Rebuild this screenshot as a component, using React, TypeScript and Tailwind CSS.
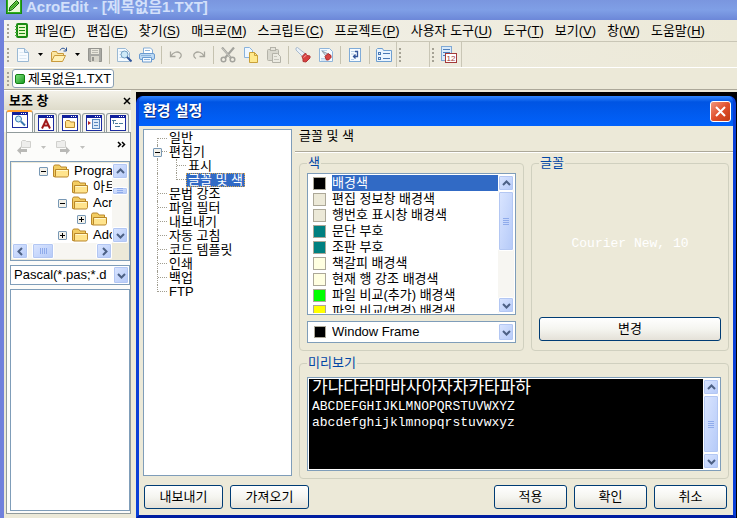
import { useState } from "react";
import type { ReactNode } from "react";
import clsx from "clsx";

const menus = [
  { label: "파일", hotkey: "F" },
  { label: "편집", hotkey: "E" },
  { label: "찾기", hotkey: "S" },
  { label: "매크로", hotkey: "M" },
  { label: "스크립트", hotkey: "C" },
  { label: "프로젝트", hotkey: "P" },
  { label: "사용자 도구", hotkey: "U" },
  { label: "도구", hotkey: "T" },
  { label: "보기", hotkey: "V" },
  { label: "창", hotkey: "W" },
  { label: "도움말", hotkey: "H" },
];

const pages = [
  { label: "일반", child: false },
  { label: "편집기", child: false, expander: true },
  { label: "표시", child: true },
  { label: "글꼴 및 색", child: true },
  { label: "문법 강조", child: false },
  { label: "파일 필터", child: false },
  { label: "내보내기", child: false },
  { label: "자동 고침", child: false },
  { label: "코드 템플릿", child: false },
  { label: "인쇄", child: false },
  { label: "백업", child: false },
  { label: "FTP", child: false },
];

const colorItems = [
  { label: "배경색", swatch: "bg-black" },
  { label: "편집 정보창 배경색", swatch: "bg-[#ece9d8]" },
  { label: "행번호 표시창 배경색", swatch: "bg-[#ece9d8]" },
  { label: "문단 부호", swatch: "bg-[#008080]" },
  { label: "조판 부호", swatch: "bg-[#008080]" },
  { label: "책갈피 배경색", swatch: "bg-[#ffffe1]" },
  { label: "현재 행 강조 배경색", swatch: "bg-[#ffffe1]" },
  { label: "파일 비교(추가) 배경색", swatch: "bg-[#00ff00]" },
  { label: "파일 비교(변경) 배경색", swatch: "bg-[#ffff00]" },
];

const folders = [
  { name: "Progra", indent: "pl-[27px]", sign: "-" },
  { name: "아트", indent: "pl-[46px]", sign: "" },
  { name: "Acr", indent: "pl-[46px]", sign: "-" },
  { name: "", indent: "pl-[65px]", sign: "+" },
  { name: "Ado", indent: "pl-[46px]", sign: "+" },
];

/* ---------- icons ---------- */

function Svg({ w = 16, h = 16, children }: { w?: number; h?: number; children: ReactNode }) {
  return (
    <svg width={w} height={h} viewBox={`0 0 ${w} ${h}`} fill="none" className="block shrink-0" aria-hidden="true">
      {children}
    </svg>
  );
}

function AppIcon() {
  return (
    <Svg>
      <rect x="0.5" y="0.5" width="15" height="15" fill="#e9fbd8" stroke="#168a10" />
      <rect x="1.5" y="1.5" width="13" height="13" stroke="#2fae1e" />
      <path d="M3 13l1-4 6.500-6.500 2.500 2.500-6.500 6.500z" fill="#6fd046" stroke="#0b5a0b" />
      <path d="M5 10.500l6-6" stroke="#0b7a0b" />
    </Svg>
  );
}

function DocIcon() {
  return (
    <Svg w={14} h={15}>
      <rect x="2" y="1" width="10" height="13" rx="1" fill="#e4f8c4" stroke="#198a12" strokeWidth="2" />
      <path d="M4 4.500h6M4 7.500h6M4 10.500h6" stroke="#198a12" />
      <path d="M0 3.500h2M0 6.500h2M0 9.500h2M0 12.500h2" stroke="#48b13a" />
    </Svg>
  );
}

function NewIcon() {
  return (
    <Svg>
      <path d="M2.500 1.500h7l4 4v9h-11z" fill="#f7fbff" stroke="#9bb9d4" />
      <path d="M9.500 1.500v4h4" fill="#d4e6f7" stroke="#9bb9d4" />
      <path d="M4.500 5.500h4M4.500 8.500h7M4.500 11.500h7" stroke="#dbe8f3" />
    </Svg>
  );
}

function OpenIcon() {
  return (
    <Svg w={18}>
      <path d="M1.500 14.500v-9l1-1h4l1 2h6v3" fill="#fbe6a0" stroke="#c99a3c" />
      <path d="M1.500 14.500l3-6h11l-3 6z" fill="#fff1b8" stroke="#c99a3c" />
      <path d="M10 3.500c1-3 5-3 6 0M16.500 0.500v3.500h-3" stroke="#2d5596" />
    </Svg>
  );
}

function SaveIcon() {
  return (
    <Svg>
      <path d="M1.500 1.500h13v13h-12l-1-1z" fill="#a9a9a4" stroke="#94948f" />
      <rect x="4" y="2" width="8" height="5" fill="#e8e6dc" />
      <rect x="4" y="9" width="8" height="6" fill="#d8d6cc" />
      <rect x="5" y="10" width="2" height="4" fill="#94948f" />
      <path d="M5 3.500h6M5 5.500h6" stroke="#b9b8b0" />
    </Svg>
  );
}

function PreviewIcon() {
  return (
    <Svg>
      <path d="M1.500 1.500h8l4 4v9h-12z" fill="#f4faff" stroke="#9bb9d4" />
      <path d="M3.500 4.500h4M3.500 7.500h2M3.500 10.500h3" stroke="#c5d9ec" />
      <circle cx="8.500" cy="7.500" r="3.500" fill="#cfeaf8" stroke="#6f9cc0" />
      <path d="M11 10l4.500 4.500" stroke="#33589c" strokeWidth="2" />
    </Svg>
  );
}

function PrintIcon() {
  return (
    <Svg>
      <path d="M4.500 6.500v-5.500h7l2 2v3.500" fill="#fff" stroke="#86aed6" />
      <rect x="0.500" y="6.500" width="15" height="6" rx="1.500" fill="#bcd9f4" stroke="#6b9bd0" />
      <path d="M3.500 10.500h9v4.500h-9z" fill="#f5faff" stroke="#6b9bd0" />
      <path d="M6 3.500h5M2 8.500h10M5 12.500h6" stroke="#8db4dc" />
    </Svg>
  );
}

function UndoIcon({ flip = false }: { flip?: boolean }) {
  return (
    <Svg>
      <g transform={flip ? "matrix(-1 0 0 1 16 0)" : undefined}>
        <path d="M2.500 4.500v5h5M3 9c2-4 6.500-5 9-3 2 1.500 1.500 4.500-1 5.500" stroke="#a7a69d" strokeWidth="1.300" />
      </g>
    </Svg>
  );
}

function CutIcon() {
  return (
    <Svg>
      <path d="M2 0.500l9 10.500M14 0.500L5 11" stroke="#a3a39d" strokeWidth="2.200" />
      <path d="M2.500 1.500l8 9" stroke="#e2e1da" strokeWidth="0.700" />
      <circle cx="3.500" cy="12.500" r="2.300" stroke="#a3a39d" strokeWidth="1.500" />
      <circle cx="12.500" cy="12.500" r="2.300" stroke="#a3a39d" strokeWidth="1.500" />
    </Svg>
  );
}

function CopyIcon() {
  return (
    <Svg>
      <path d="M1.500 0.500h5l3 3v7h-8z" fill="#eff7ff" stroke="#88b2dc" />
      <path d="M6.500 5.500h5l3 3v7h-8z" fill="#ffe98c" stroke="#c9a13a" />
      <path d="M11.500 5.500v3h3" stroke="#c9a13a" />
    </Svg>
  );
}

function PasteIcon() {
  return (
    <Svg>
      <rect x="1.500" y="2.500" width="11" height="11" rx="1" fill="#d9d8ce" stroke="#b4b3a9" />
      <rect x="4.500" y="0.500" width="5" height="3" fill="#e6e4da" stroke="#b4b3a9" />
      <path d="M6.500 6.500h5l3 3v6h-8z" fill="#ecebe2" stroke="#b4b3a9" />
      <path d="M8 9.500h3M8 12.500h5" stroke="#c7c6bd" />
    </Svg>
  );
}

function TorchIcon() {
  return (
    <Svg>
      <path d="M1 1l1.500-.5L10 6.500 7.500 9.500 1 3z" fill="#eaf1f8" stroke="#a9bbce" />
      <path d="M7 9.500L10.500 6l1.500 2.500 3 .5v2l-4 4-3-.5v-2.500z" fill="#d84040" stroke="#b03434" />
      <path d="M8.500 10.500l3-2.500" stroke="#f3a0a0" />
    </Svg>
  );
}

function TorchPageIcon() {
  return (
    <Svg>
      <path d="M1.500 1.500h10l3 3v10h-13z" fill="#f4faff" stroke="#8fb5da" />
      <path d="M3 3.500h6M3 11.500h5M3 13h6" stroke="#b9d2ea" />
      <path d="M4 4l4 5 2-2z" fill="#dfe7f0" stroke="#8d9aaa" />
      <path d="M7 9.500l3-3 3 2v2l-2.500 2.500h-2z" fill="#d94545" stroke="#a82c2c" />
    </Svg>
  );
}

function WrapIcon() {
  return (
    <Svg>
      <rect x="2.500" y="1.500" width="11" height="13" fill="#f6fbff" stroke="#7fabd8" />
      <path d="M4 4.500h4M4 7h3M4 12.500h3" stroke="#b5cde6" />
      <path d="M8 4.500h2.500v5h-4M8.500 7.500l-2 2 2 2" stroke="#33559a" strokeWidth="1.300" />
    </Svg>
  );
}

function ListIcon() {
  return (
    <Svg>
      <path d="M0.500 14.500v-12l1-1h5l1 2h8v11z" fill="#e9f4ff" stroke="#6f9fd0" />
      <rect x="2.500" y="5.500" width="2" height="2" stroke="#4978b4" />
      <rect x="2.500" y="10.500" width="2" height="2" stroke="#4978b4" />
      <path d="M7 6.500h7M7 11.500h7" stroke="#4978b4" />
    </Svg>
  );
}

function DateIcon() {
  return (
    <Svg w={17} h={17}>
      <rect x="1.500" y="0.500" width="10" height="14" fill="#d9eafa" stroke="#7fa8d4" />
      <path d="M3 3.500h7M3 6.500h7M3 9.500h3" stroke="#4f80bd" />
      <rect x="5.500" y="7.500" width="11" height="9" fill="#fff" stroke="#a33a3a" />
      <text x="11" y="15" textAnchor="middle" fontSize="8" fill="#a33a3a">12</text>
    </Svg>
  );
}

function FolderIcon() {
  return (
    <Svg>
      <path d="M0.500 3.500l1-1.500h5l1.500 2h5.500v9.500h-13z" fill="#f3cd62" stroke="#b9872a" />
      <path d="M2.500 13.500V6.500h13v6l-1 1.500H1.500" fill="#ffe48d" stroke="#b9872a" />
      <path d="M3.500 7.500h11" stroke="#fff8cf" />
    </Svg>
  );
}

function NavIcon({ flip = false }: { flip?: boolean }) {
  return (
    <Svg>
      <g transform={flip ? "matrix(-1 0 0 1 16 0)" : undefined}>
        <path d="M5.500 2.500l1-1h3l1 1h4v6h-9z" fill="#eeeeec" stroke="#d0d0cd" />
        <path d="M1 11.500l4-4v2.500h6v3H5v2.500z" fill="#b9b9b6" />
      </g>
    </Svg>
  );
}

function PaneIcon({ children }: { children: ReactNode }) {
  return (
    <Svg>
      <rect x="0.500" y="0.500" width="15" height="15" fill="#fff" stroke="#1c2ca0" />
      <rect x="0" y="0" width="16" height="3" fill="#10209c" />
      <path d="M9 1.500h1M11 1.500h1M13 1.500h1" stroke="#fff" />
      {children}
    </Svg>
  );
}

function Chevron({ dir }: { dir: "up" | "down" | "left" | "right" }) {
  const d = {
    up: "M1 6l3.500-3.500L8 6",
    down: "M1 3l3.500 3.500L8 3",
    left: "M6 1L2.500 4.500L6 8",
    right: "M3 1l3.500 3.500L3 8",
  }[dir];
  return (
    <Svg w={9} h={9}>
      <path d={d} stroke="#4d6185" strokeWidth="2" />
    </Svg>
  );
}

function Caret({ className = "text-black" }: { className?: string }) {
  return (
    <span className={className}>
      <Svg w={5} h={3}>
        <path d="M0 0h5L2.500 3z" fill="currentColor" />
      </Svg>
    </span>
  );
}

/* ---------- small controls ---------- */

const knob =
  "flex items-center justify-center rounded-xs border border-white bg-linear-to-br from-[#dbe6ff] to-[#b4c9f8] shadow-[inset_0_0_0_1px_#b3c7f3]";

function ScrollBar({ thumb, horizontal = false }: { thumb: string; horizontal?: boolean }) {
  return (
    <div className={clsx("flex shrink-0 bg-[#f7f6f2]", horizontal ? "h-4 flex-row" : "w-4 flex-col")}>
      <button aria-label={horizontal ? "왼쪽" : "위로"} className={clsx(knob, "size-4 shrink-0")}>
        <Chevron dir={horizontal ? "left" : "up"} />
      </button>
      <div className={clsx("flex min-h-0 min-w-0 flex-1", horizontal ? "flex-row" : "flex-col")}>
        <div className={clsx(knob, thumb)}>
          <span className={clsx("flex gap-px", !horizontal && "flex-col")}>
            {[0, 1, 2, 3].map((i) => (
              <span key={i} className={clsx("bg-[#8fabeb]", horizontal ? "h-1.5 w-px" : "h-px w-1.5")} />
            ))}
          </span>
        </div>
      </div>
      <button aria-label={horizontal ? "오른쪽" : "아래로"} className={clsx(knob, "size-4 shrink-0")}>
        <Chevron dir={horizontal ? "right" : "down"} />
      </button>
    </div>
  );
}

function Grip() {
  return (
    <span className="mx-0.5 flex shrink-0 flex-col gap-0.5">
      {[0, 1, 2, 3].map((i) => (
        <span key={i} className="size-0.5 bg-[#a5a295]" />
      ))}
    </span>
  );
}

function Separator() {
  return <span className="h-[18px] w-px shrink-0 bg-[#c5c2b0]" />;
}

function ToolButton({ label, children }: { label: string; children: ReactNode }) {
  return (
    <button aria-label={label} className="flex h-5 shrink-0 items-center">
      {children}
    </button>
  );
}

function ToolGroup({ children }: { children: ReactNode }) {
  return <div className="flex items-center gap-[7px]">{children}</div>;
}

function PushButton({ className, children }: { className: string; children: ReactNode }) {
  return (
    <button
      className={clsx(
        "h-6 rounded-[3px] border border-[#003c74] bg-linear-to-b from-white via-[#f5f5f0] to-[#e4e1d8] leading-4",
        className
      )}
    >
      {children}
    </button>
  );
}

function Expander({ sign }: { sign: string }) {
  return (
    <Svg w={9} h={9}>
      <rect x="0.500" y="0.500" width="8" height="8" rx="0.500" fill="#f3f1ea" stroke="#7898b5" />
      <path d="M2 4.500h5" stroke="#000" />
      {sign === "+" && <path d="M4.500 2v5" stroke="#000" />}
    </Svg>
  );
}

/* ---------- panels ---------- */

function MainToolbar() {
  return (
    <div className="flex h-[26px] items-center border-b border-white bg-linear-to-r from-[#f1efe8] to-[#ece9d8]">
      <div className="flex h-full items-center gap-1.5 border-r border-[#c9c6b6] pl-px pr-1">
        <div className="flex items-center gap-1">
          <Grip />
          <ToolGroup>
            <ToolButton label="새로 만들기"><NewIcon /></ToolButton>
            <Caret />
            <ToolButton label="열기"><OpenIcon /></ToolButton>
            <Caret />
            <ToolButton label="저장"><SaveIcon /></ToolButton>
          </ToolGroup>
        </div>
        <Separator />
        <ToolGroup>
          <ToolButton label="미리 보기"><PreviewIcon /></ToolButton>
          <ToolButton label="인쇄"><PrintIcon /></ToolButton>
        </ToolGroup>
        <Separator />
        <ToolGroup>
          <ToolButton label="실행 취소"><UndoIcon /></ToolButton>
          <ToolButton label="다시 실행"><UndoIcon flip /></ToolButton>
        </ToolGroup>
        <Separator />
        <ToolGroup>
          <ToolButton label="잘라내기"><CutIcon /></ToolButton>
          <ToolButton label="복사"><CopyIcon /></ToolButton>
          <ToolButton label="붙여넣기"><PasteIcon /></ToolButton>
        </ToolGroup>
        <Separator />
        <ToolGroup>
          <ToolButton label="찾기"><TorchIcon /></ToolButton>
          <ToolButton label="파일에서 찾기"><TorchPageIcon /></ToolButton>
        </ToolGroup>
        <Separator />
        <ToolButton label="자동 줄바꿈"><WrapIcon /></ToolButton>
        <Separator />
        <ToolButton label="목록"><ListIcon /></ToolButton>
      </div>
      <div className="flex h-full w-[33px] items-center border-r border-[#c9c6b6]">
        <Grip />
      </div>
      <div className="flex h-full items-center gap-1 border-r border-[#c9c6b6] pr-1">
        <Grip />
        <ToolButton label="날짜 삽입"><DateIcon /></ToolButton>
      </div>
    </div>
  );
}

function SidePane() {
  const tab = "flex h-[19px] w-[23px] items-center justify-center rounded-t-[3px] border border-b-0 border-[#919b9c] bg-[#f4f3ee]";
  return (
    <aside className="flex w-[132px] shrink-0 flex-col bg-[#ece9d8] pb-1 pr-[5px]">
      <div className="flex h-5 items-center justify-between border-t border-white pl-[5px] bg-linear-to-b from-[#f3f1e8] to-[#dedbca]">
        <h2 className="font-bold leading-4">보조 창</h2>
        <button aria-label="닫기">
          <Svg w={8} h={8}>
            <path d="M1 1l6 6M7 1L1 7" stroke="#000" strokeWidth="1.500" />
          </Svg>
        </button>
      </div>
      <div className="flex h-[22px] items-end gap-px bg-[#f7f6f0] pl-0.5">
        <button aria-label="탐색기" className="flex h-[22px] w-[27px] justify-center rounded-t-[3px] border-x border-t-2 border-x-[#919b9c] border-t-[#ffa02f] bg-white">
          <PaneIcon>
            <circle cx="6.500" cy="7" r="3" fill="#c8ecfa" stroke="#3a77b0" />
            <path d="M9 9.500l4 4" stroke="#3a77b0" strokeWidth="2" />
          </PaneIcon>
        </button>
        <button aria-label="글자" className={tab}>
          <PaneIcon><path d="M4 13.500L8 5l4 8.500M5.500 10.500h5" stroke="#a01818" strokeWidth="2" /></PaneIcon>
        </button>
        <button aria-label="폴더" className={tab}>
          <PaneIcon><path d="M3.500 12.500v-6l1-1h3l1 1.500h4v5.500z" fill="#ffe08a" stroke="#b9872a" /></PaneIcon>
        </button>
        <button aria-label="책갈피" className={tab}>
          <PaneIcon>
            <path d="M2 6l3 2-3 2z" fill="#b02020" />
            <rect x="6.500" y="4.500" width="7" height="9" fill="#dcebf9" stroke="#5b89bd" />
            <path d="M8 7.500h4M8 10.500h4" stroke="#5b89bd" />
          </PaneIcon>
        </button>
        <button aria-label="구조" className={tab}>
          <PaneIcon><path d="M2 5.500h4M5 8.500h3M9 8.500h4M5 11.500h5M3.500 6v3" stroke="#4c7c9c" /></PaneIcon>
        </button>
      </div>
      <div className="ml-0.5 flex min-h-0 flex-1 flex-col border border-[#919b9c] bg-[#fcfcfa] pb-0.5 pl-[3px]">
        <div className="flex h-7 shrink-0 items-center gap-[9px] pl-1.5">
          <button aria-label="뒤로"><NavIcon /></button>
          <Caret className="text-[#c0c0bd]" />
          <button aria-label="앞으로"><NavIcon flip /></button>
          <Caret className="text-[#c0c0bd]" />
          <button aria-label="더 보기" className="ml-auto mr-1 self-start pt-2">
            <Svg w={9} h={7}>
              <path d="M1 1l2.500 2.500L1 6M5 1l2.500 2.500L5 6" stroke="#000" strokeWidth="1.500" />
            </Svg>
          </button>
        </div>
        <div className="flex h-[100px] shrink-0 flex-col border border-[#7f9db9] bg-[#ece9d8] p-px">
          <div className="flex h-20 min-h-0">
            <ul className="min-w-0 flex-1 overflow-hidden bg-white">
              {folders.map((folder, i) => (
                <li key={i} className={clsx("flex h-4 items-center gap-[5px] whitespace-nowrap", folder.indent)}>
                  <span className="w-[9px] shrink-0">{folder.sign && <Expander sign={folder.sign} />}</span>
                  <FolderIcon />
                  <span className="leading-4">{folder.name}</span>
                </li>
              ))}
            </ul>
            <ScrollBar thumb="mt-2 h-2 overflow-hidden" />
          </div>
          <div className="mr-4">
            <ScrollBar horizontal thumb="ml-1 w-[22px]" />
          </div>
        </div>
        <div className="mt-1 flex h-5 shrink-0 items-center border border-[#7f9db9] bg-white">
          <select aria-label="파일 형식" className="min-w-0 flex-1 appearance-none overflow-hidden whitespace-nowrap bg-white pl-[3px] leading-4">
            <option>Pascal(*.pas;*.d</option>
          </select>
          <span className={clsx(knob, "h-[18px] w-4 shrink-0")}><Chevron dir="down" /></span>
        </div>
        <div className="mt-1 flex-1 border border-[#7f9db9] bg-white" />
      </div>
    </aside>
  );
}

function PageTree({ selected, onSelect }: { selected: string; onSelect: (label: string) => void }) {
  const dots = "border-dotted border-[#a09d90]";
  return (
    <ul className="mb-0.5 mt-[3px] w-[149px] shrink-0 border border-[#7f9db9] bg-white pl-[13px] pt-px">
      {pages.map((page, i) => {
        const last = i === pages.length - 1;
        const lastChild = page.child && !pages[i + 1].child;
        return (
          <li key={page.label} className="relative flex h-3.5">
            <span className={clsx("flex w-2.5 shrink-0 flex-col", i === 0 && "justify-end")}>
              <span className={clsx("border-l", dots, i === 0 || last ? "h-1/2" : "h-full", i === 0 && "border-t", last && "border-b")}>
                {i > 0 && !last && !page.child && <span className={clsx("block h-1/2 border-b", dots)} />}
              </span>
            </span>
            {page.expander && (
              <span className="absolute -left-1 top-[3px]">
                <Expander sign="-" />
              </span>
            )}
            {page.child && (
              <span className="ml-[9px] w-2.5 shrink-0">
                <span className={clsx("block border-l", dots, lastChild ? "h-1/2 border-b" : "h-full")}>
                  {!lastChild && <span className={clsx("block h-1/2 border-b", dots)} />}
                </span>
              </span>
            )}
            <button
              onClick={() => onSelect(page.label)}
              className={clsx(
                "whitespace-nowrap px-0.5 leading-3.5",
                page.label === selected && "bg-[#316ac5] text-white outline-1 -outline-offset-1 outline-dotted outline-[#d8a850]"
              )}
            >
              {page.label}
            </button>
          </li>
        );
      })}
    </ul>
  );
}

function Group({ title, className, children }: { title: string; className?: string; children: ReactNode }) {
  return (
    <fieldset className={clsx("min-w-0 rounded-[4px] border border-[#d0d0bf] px-[7px] pb-[7px]", className)}>
      <legend className="px-px leading-4 text-[#0046a5]">{title}</legend>
      {children}
    </fieldset>
  );
}

function SettingsDialog() {
  const [page, setPage] = useState("글꼴 및 색");
  const [item, setItem] = useState("배경색");

  return (
    <section
      role="dialog"
      aria-labelledby="dialog-title"
      className="mr-px flex min-w-0 flex-1 flex-col rounded-t-[7px] border-x-[3px] border-b-[3px] border-[#0a3fd6] border-b-[#001ea0] bg-[#0a5be8]"
    >
      <header className="flex h-[30px] shrink-0 items-center justify-between rounded-t-[5px] bg-linear-to-b from-[#2f86ff] via-[#0054e3] via-20% to-[#0162fb] pl-1 pr-0.5">
        <h1 id="dialog-title" className="text-[15px] font-bold leading-5 text-white [text-shadow:1px_1px_#0a2a80]">환경 설정</h1>
        <button aria-label="닫기" className="flex size-[21px] items-center justify-center rounded-[3px] border border-white bg-linear-to-br from-[#f0957a] via-[#e0502c] to-[#c23a12]">
          <Svg w={13} h={13}>
            <path d="M2 2l9 9M11 2l-9 9" stroke="#fff" strokeWidth="2" />
          </Svg>
        </button>
      </header>

      <div className="flex min-h-0 flex-1 flex-col bg-[#ece9d8]">
        <div className="flex min-h-0 flex-1 gap-[3px] pl-1">
          <PageTree selected={page} onSelect={setPage} />
          <div className="flex min-w-0 flex-1 flex-col">
            <h2 className="h-[26px] shrink-0 border-b border-[#aca899] pl-1 leading-5 shadow-[0_1px_#fff]">{page}</h2>
            <div className="flex min-h-0 flex-1 flex-col gap-1 px-1 pt-[3px]">
              <div className="flex gap-[7px]">
                <Group title="색" className="w-[225px] shrink-0">
                  <div className="mt-0.5 flex h-[142px] border border-[#7f9db9] bg-white p-px">
                    <ul role="listbox" aria-label="색 항목" className="min-w-0 flex-1 overflow-hidden">
                      {colorItems.map((color) => (
                        <li
                          key={color.label}
                          role="option"
                          aria-selected={color.label === item}
                          onClick={() => setItem(color.label)}
                          className="flex h-4 items-center gap-1.5 pl-1"
                        >
                          <span className={clsx("size-[13px] shrink-0 border border-[#aca899]", color.swatch)} />
                          <span className={clsx("flex-1 whitespace-nowrap leading-4", color.label === item && "bg-[#316ac5] text-white")}>
                            {color.label}
                          </span>
                        </li>
                      ))}
                    </ul>
                    <ScrollBar thumb="h-[60px]" />
                  </div>
                  <div className="mt-1.5 flex h-[22px] items-center border border-[#7f9db9] bg-white pl-1.5 pr-px">
                    <span className="size-3 shrink-0 border border-[#aca899] bg-black" />
                    <select aria-label="색 선택" className="ml-1.5 min-w-0 flex-1 appearance-none bg-white leading-4">
                      <option>Window Frame</option>
                    </select>
                    <span className={clsx(knob, "h-[18px] w-4 shrink-0")}><Chevron dir="down" /></span>
                  </div>
                </Group>
                <Group title="글꼴" className="flex-1">
                  <div className="flex h-full flex-col">
                    <p className="flex flex-1 items-center justify-center font-['Liberation_Mono','Noto_Sans_CJK_KR',monospace] text-white">
                      Courier New, 10
                    </p>
                    <PushButton className="mb-0.5 w-full">변경</PushButton>
                  </div>
                </Group>
              </div>
              <Group title="미리보기">
                <div className="mt-1.5 flex h-[94px] border border-[#7f9db9] bg-white p-px">
                  <div className="min-w-0 flex-1 bg-black pl-[3px] font-['Liberation_Mono','Noto_Sans_CJK_KR',monospace] leading-4 text-white">
                    <p className="text-[17px] leading-5">가나다라마바사아자차카타파하</p>
                    <p>ABCDEFGHIJKLMNOPQRSTUVWXYZ</p>
                    <p>abcdefghijklmnopqrstuvwxyz</p>
                  </div>
                  <ScrollBar thumb="flex-1" />
                </div>
              </Group>
            </div>
          </div>
        </div>
        <footer className="flex shrink-0 gap-[7px] pb-1.5 pl-[5px] pr-1.5 pt-[7px]">
          <PushButton className="w-[79px]">내보내기</PushButton>
          <PushButton className="w-[79px]">가져오기</PushButton>
          <span className="flex-1" />
          <PushButton className="w-[73px]">적용</PushButton>
          <PushButton className="w-[73px]">확인</PushButton>
          <PushButton className="w-[73px]">취소</PushButton>
        </footer>
      </div>
    </section>
  );
}

export default function App() {
  return (
    <div className="flex h-screen flex-col overflow-hidden bg-[#ece9d8] font-['Liberation_Sans','Noto_Sans_CJK_KR',sans-serif] text-[13px] text-black">
      <header className="flex h-5 shrink-0 items-start gap-1 bg-linear-to-b from-[#7a96df] via-[#7f9fe6] to-[#6c87d8] pl-1.5">
        <div className="flex h-3.5 items-end"><AppIcon /></div>
        <span className="text-[15px] font-bold leading-3.5 text-[#d3e0fa]">AcroEdit - [제목없음1.TXT]</span>
      </header>

      <div className="flex min-h-0 flex-1 flex-col border-l-4 border-[#7080dc]">
        <nav className="flex h-[22px] shrink-0 items-center border-b border-[#c9c6b6] bg-linear-to-r from-[#f4f3ee] to-[#ece9d8] pl-px">
          <Grip />
          <span className="ml-1"><DocIcon /></span>
          <div className="ml-1.5 flex gap-[11px]">
            {menus.map((menu) => (
              <button key={menu.label} className="whitespace-nowrap leading-4">
                {menu.label}(<u className="underline-offset-2">{menu.hotkey}</u>)
              </button>
            ))}
          </div>
        </nav>
        <MainToolbar />
        <div className="flex h-[22px] shrink-0 items-center border-b border-[#aca899] pl-px">
          <Grip />
          <button className="ml-px flex h-[19px] items-center gap-[3px] rounded-[3px] border border-[#8ba0b4] bg-white px-0.5 leading-4">
            <span className="size-2.5 rounded-xs border border-[#108010] bg-linear-to-br from-[#7be07b] to-[#0f9a1c]" />
            제목없음1.TXT
          </button>
        </div>

        <main className="flex min-h-0 flex-1">
          <SidePane />
          <div className="flex min-w-0 flex-1 border-t-2 border-[#ece9d8] bg-black pt-1">
            <SettingsDialog />
          </div>
        </main>
      </div>
    </div>
  );
}
